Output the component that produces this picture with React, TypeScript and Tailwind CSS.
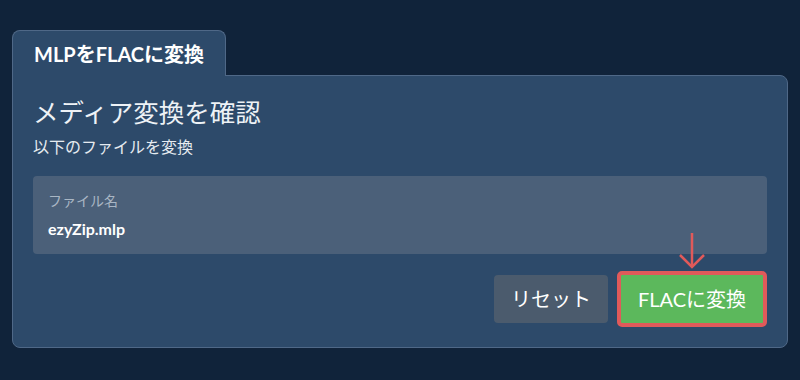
export default function App() {
  return (
    <div
      className="h-[380px] w-[800px] bg-[#10233a] px-3 pt-[30px]"
      style={{ fontFamily: 'Lato, "Noto Sans CJK JP", sans-serif' }}
    >
      <div className="flex">
        <div className="flex h-[46px] w-[214px] items-center whitespace-nowrap rounded-t-lg border border-b-0 border-[#4f6887] bg-[#2d4a6a] px-[21px] text-[20px] font-bold text-white">
          MLPをFLACに変換
        </div>
      </div>
      <div className="-mt-px h-[273px] rounded-b-lg rounded-tr-lg border border-[#4f6887] bg-[#2d4a6a] px-[20px] pt-[20px]">
        <h1 className="text-[25.5px] leading-[32px] text-[#eef2f6]">メディア変換を確認</h1>
        <p className="mt-[9px] text-[16px] leading-[20px] text-[#e6ebf0]">以下のファイルを変換</p>
        <div className="mt-[19px] h-[78px] rounded bg-[#4b6079] px-[15px] pt-[16px]">
          <div className="text-[14px] leading-[18px] text-[#a9b6c4]">ファイル名</div>
          <div className="mt-[9px] text-[16px] font-bold leading-[20px] text-white">ezyZip.mlp</div>
        </div>
        <div className="mt-[17px] flex items-center justify-end gap-[9px]">
          <button className="h-[48px] w-[114px] rounded bg-[#4b5b6d] text-[20px] text-white">リセット</button>
          <div className="relative">
            <svg
              className="absolute left-[55px] top-[-38px]"
              width="40"
              height="36"
              viewBox="0 0 40 36"
              fill="none"
              stroke="#e05a5a"
              strokeWidth="2.5"
            >
              <path d="M20 0 V34" />
              <path d="M8 22 L20 34 L32 22" />
            </svg>
            <button className="h-[56px] w-[150px] rounded-[5px] border-[4px] border-[#e05a5a] bg-[#5cb85c] text-[20px] text-white">
              FLACに変換
            </button>
          </div>
        </div>
      </div>
    </div>
  )
}
